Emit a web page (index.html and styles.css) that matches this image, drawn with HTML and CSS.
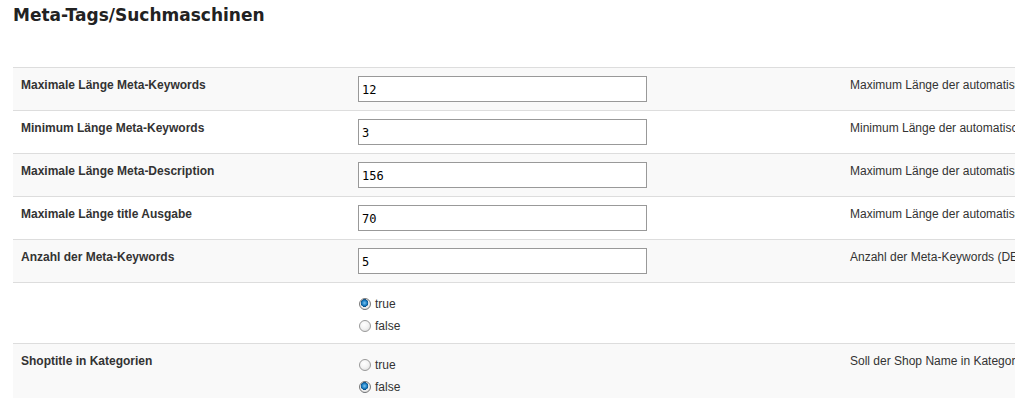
FILE: index.html
```html
<!DOCTYPE html>
<html lang="de">
<head>
  <meta charset="UTF-8">
  <title>Meta-Tags/Suchmaschinen</title>
  <meta name="viewport" content="width=device-width, initial-scale=1.0">
  <link rel="stylesheet" href="styles.css">
</head>
<body>

<div class="page">
  <h2 class="page-title">Meta-Tags/Suchmaschinen</h2>

  <!-- Konfigurationstabelle -->
  <table class="config">
    <tbody>
      <tr>
        <td class="key">Maximale Länge Meta-Keywords</td>
        <td class="value"><input type="text" value="12"></td>
        <td class="desc">Maximum Länge der automatisch generierten Meta-Keywords</td>
      </tr>
      <tr>
        <td class="key">Minimum Länge Meta-Keywords</td>
        <td class="value"><input type="text" value="3"></td>
        <td class="desc">Minimum Länge der automatisch generierten Meta-Keywords</td>
      </tr>
      <tr>
        <td class="key">Maximale Länge Meta-Description</td>
        <td class="value"><input type="text" value="156"></td>
        <td class="desc">Maximum Länge der automatisch generierten Meta-Description</td>
      </tr>
      <tr>
        <td class="key">Maximale Länge title Ausgabe</td>
        <td class="value"><input type="text" value="70"></td>
        <td class="desc">Maximum Länge der automatisch generierten title Ausgabe</td>
      </tr>
      <tr>
        <td class="key">Anzahl der Meta-Keywords</td>
        <td class="value"><input type="text" value="5"></td>
        <td class="desc">Anzahl der Meta-Keywords (DE und EN)</td>
      </tr>
      <tr>
        <td class="key"></td>
        <td class="value radios">
          <label class="radio"><input type="radio" name="r1" checked> true</label>
          <label class="radio"><input type="radio" name="r1"> false</label>
        </td>
        <td class="desc"></td>
      </tr>
      <tr>
        <td class="key">Shoptitle in Kategorien</td>
        <td class="value radios">
          <label class="radio"><input type="radio" name="r2"> true</label>
          <label class="radio"><input type="radio" name="r2" checked> false</label>
        </td>
        <td class="desc">Soll der Shop Name in Kategorien angezeigt werden?</td>
      </tr>
    </tbody>
  </table>
</div>

</body>
</html>
```

FILE: styles.css
```css
body {
  margin: 0;
  font-family: "Liberation Sans", Arial, sans-serif;
  font-size: 12px;
  color: #333;
  background: #fff;
  overflow: hidden;
}
.page {
  padding: 0 0 0 13px;
  width: 1400px;
}
.page-title {
  margin: 5px 0 0 0;
  font-family: "DejaVu Sans", sans-serif;
  font-size: 17px;
  line-height: 20px;
  color: #222;
  font-weight: bold;
}
.config {
  margin-top: 42px;
  width: 1300px;
  border-collapse: collapse;
}
.config tr {
  border-top: 1px solid #ddd;
}
.config tr:nth-child(odd) {
  background: #f9f9f9;
}
.config td {
  padding: 8px;
  vertical-align: top;
  line-height: 16px;
}
.key {
  width: 321px;
  font-weight: bold;
  color: #333;
  padding-top: 9px !important;
}
.value {
  width: 476px;
}
.config td.radios {
  padding: 10px 8px 6px;
}
.desc {
  white-space: nowrap;
  color: #333;
  padding-top: 9px !important;
}
.value input[type="text"] {
  display: block;
  box-sizing: border-box;
  width: 289px;
  height: 26px;
  margin: 0;
  padding: 2px 3px 0;
  border: 1px solid #999;
  background: #fff;
  font-family: "DejaVu Sans Mono", monospace;
  font-size: 12px;
  color: #000;
}
.radio {
  display: flex;
  align-items: center;
  height: 22px;
  font-size: 12px;
  color: #333;
}
.radio input {
  appearance: none;
  -webkit-appearance: none;
  width: 12px;
  height: 12px;
  margin: 0 4px 0 1px;
  border-radius: 50%;
  border: 1px solid #9a9a9a;
  background: radial-gradient(circle at 40% 35%, #fff 0%, #f2f2f2 50%, #d4d4d4 100%);
  box-sizing: border-box;
}
.radio input:checked {
  background:
    radial-gradient(circle at 45% 40%, #7fc4f0 0%, #1a7fc4 30%, #0d4f86 45%, transparent 50%),
    radial-gradient(circle at 40% 35%, #fff 0%, #eee 60%, #ccc 100%);
  border-color: #7a7a7a;
}
```
